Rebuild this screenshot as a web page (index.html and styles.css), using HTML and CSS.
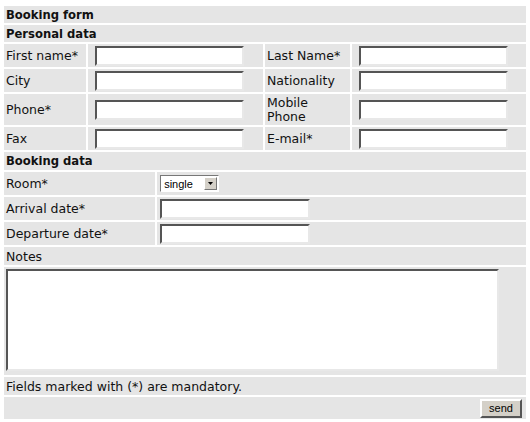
FILE: index.html
```html
<!DOCTYPE html>
<html lang="en">
<head>
  <meta charset="UTF-8" />
  <title>Booking form</title>
  <link rel="stylesheet" href="styles.css">
</head>
<body>
  <form>
  <table class="form personal">
    <colgroup><col class="c1"><col class="c2"><col class="c3"><col class="c4"></colgroup>
    <tr><th colspan="4">Booking form</th></tr>
    <tr><th colspan="4">Personal data</th></tr>
    <tr>
      <td class="lbl">First name*</td><td class="fld"><input type="text"></td>
      <td class="lbl">Last Name*</td><td class="fld"><input type="text"></td>
    </tr>
    <tr>
      <td class="lbl">City</td><td class="fld"><input type="text"></td>
      <td class="lbl">Nationality</td><td class="fld"><input type="text"></td>
    </tr>
    <tr class="tall">
      <td class="lbl">Phone*</td><td class="fld"><input type="text"></td>
      <td class="lbl">Mobile<br>Phone</td><td class="fld"><input type="text"></td>
    </tr>
    <tr>
      <td class="lbl">Fax</td><td class="fld"><input type="text"></td>
      <td class="lbl">E-mail*</td><td class="fld"><input type="text"></td>
    </tr>
  </table>

  <table class="form booking">
    <colgroup><col class="b1"><col class="b2"></colgroup>
    <tr><th colspan="2" class="sub">Booking data</th></tr>
    <tr>
      <td class="lbl">Room*</td>
      <td class="fld">
        <span class="select"><select><option>single</option><option>double</option></select><span class="arrow"><svg width="5" height="3" viewBox="0 0 5 3"><path d="M0 0h5L2.5 3z" fill="#000"/></svg></span></span>
      </td>
    </tr>
    <tr><td class="lbl">Arrival date*</td><td class="fld"><input type="text"></td></tr>
    <tr><td class="lbl">Departure date*</td><td class="fld"><input type="text"></td></tr>
    <tr><td colspan="2" class="lbl short">Notes</td></tr>
    <tr><td colspan="2" class="notes"><textarea></textarea></td></tr>
    <tr><td colspan="2" class="lbl short">Fields marked with (*) are mandatory.</td></tr>
    <tr><td colspan="2" class="actions"><button type="button">send</button></td></tr>
  </table>
  </form>
</body>
</html>
```

FILE: styles.css
```css
body {
  margin: 4px 2px;
  background: #fff;
  font-family: "DejaVu Sans", Verdana, sans-serif;
  font-size: 12.5px;
  color: #111;
}
form {
  margin: 0;
}
.form {
  width: 526px;
  table-layout: fixed;
  border-spacing: 2px;
  border-collapse: separate;
  margin: 0;
}
.form + .form {
  margin-top: -2px;
}
.c1 { width: 82px; }
.c2 { width: 175px; }
.c3 { width: 85px; }
.c4 { width: 174px; }
.b1 { width: 150px; }
.b2 { width: 366px; }

.form th {
  background: #e5e5e5;
  text-align: left;
  font-size: 11.6px;
  font-weight: bold;
  padding: 0 2px;
  height: 17px;
}
.form th.sub {
  height: 18px;
}
.form td {
  background: #e5e5e5;
  padding: 0 2px;
  height: 23px;
  white-space: nowrap;
}
.form tr.tall td {
  height: 31px;
  line-height: 14px;
}
.form td.short {
  height: 18px;
}
.personal .fld {
  padding-left: 7px;
}
.personal .fld input {
  width: 149px;
}
.booking .fld {
  padding-left: 3px;
}
.fld input {
  display: block;
  width: 150px;
  height: 20px;
  box-sizing: border-box;
  margin: 0;
  border: 2px solid;
  border-color: #555 #e8e8e8 #e8e8e8 #555;
  background: #fff;
  padding: 0 2px;
  font: inherit;
}
.select {
  display: inline-flex;
  align-items: center;
  height: 17px;
  box-sizing: border-box;
  width: 59px;
  border: 1px solid;
  border-color: #777 #fff #fff #777;
  background: #fff;
  vertical-align: middle;
}
.select select {
  appearance: none;
  border: none;
  background: transparent;
  font-family: "Liberation Sans", Arial, sans-serif;
  font-size: 11px;
  width: 43px;
  padding: 0 0 0 3px;
  margin: 0;
  color: #000;
}
.arrow {
  display: flex;
  align-items: center;
  justify-content: center;
  width: 13px;
  height: 13px;
  box-sizing: border-box;
  background: #d4d0c8;
  border: 1px solid;
  border-color: #fff #777 #777 #fff;
}
.form td.notes {
  height: auto;
  padding: 2px 2px 4px;
}
.notes textarea {
  display: block;
  width: 493px;
  height: 102px;
  box-sizing: border-box;
  margin: 0;
  border: 2px solid;
  border-color: #555 #e8e8e8 #e8e8e8 #555;
  background: #fff;
  resize: none;
}
.form td.actions {
  height: 22px;
  text-align: right;
  padding: 0 4px 0 2px;
}
.actions button {
  width: 42px;
  height: 19px;
  padding: 0;
  background: #d4d0c8;
  border: 2px solid;
  border-color: #fff #555 #555 #fff;
  font-family: "Liberation Sans", Arial, sans-serif;
  font-size: 11px;
  color: #000;
  vertical-align: middle;
}
```
